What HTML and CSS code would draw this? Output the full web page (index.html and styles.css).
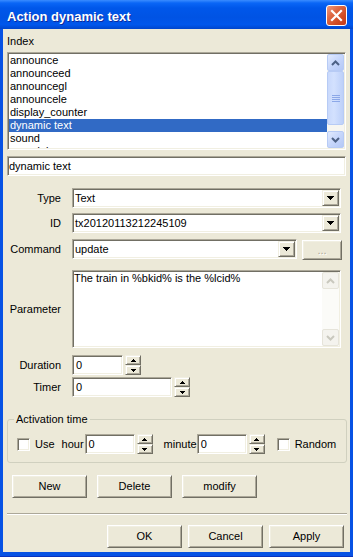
FILE: index.html
```html
<!DOCTYPE html>
<html>
<head>
<meta charset="utf-8">
<link rel="stylesheet" href="styles.css">
</head>
<body>
<div class="window">
  <div class="titlebar">
    <span class="title">Action dynamic text</span>
    <div class="close">
      <svg width="19" height="19" viewBox="0 0 19 19"><path d="M5 5L14 14M14 5L5 14" stroke="#fff" stroke-width="2.2" stroke-linecap="square"/></svg>
    </div>
  </div>
  <div class="client">
    <div class="lbl-index">Index</div>
    <div class="listbox sunken">
      <ul class="items">
        <li>announce</li>
        <li>announceed</li>
        <li>announcegl</li>
        <li>announcele</li>
        <li>display_counter</li>
        <li class="sel">dynamic text</li>
        <li>sound</li>
        <li class="partial">soundplay</li>
      </ul>
      <div class="xscroll">
        <div class="xbtn"><svg width="9" height="6" viewBox="0 0 9 6"><path d="M1 5L4.5 1.5L8 5" fill="none" stroke="#4D6185" stroke-width="2"/></svg></div>
        <div class="xtrack">
          <div class="xthumb"><svg width="8" height="7" viewBox="0 0 8 7"><path d="M0 0.5H8M0 2.5H8M0 4.5H8M0 6.5H8" stroke="#8CA8E8" stroke-width="1"/></svg></div>
        </div>
        <div class="xbtn"><svg width="9" height="6" viewBox="0 0 9 6"><path d="M1 1L4.5 4.5L8 1" fill="none" stroke="#4D6185" stroke-width="2"/></svg></div>
      </div>
    </div>
    <div class="field sunken">dynamic text</div>

    <div class="row r-type">
      <span class="lbl">Type</span>
      <div class="combo sunken w-full"><span class="ctext">Text</span><span class="ddbtn raised"><svg width="7" height="4" viewBox="0 0 7 4"><path d="M0 0h7v1h-1v1h-1v1h-1v1h-1v-1h-1v-1h-1v-1h-1z" fill="#000"/></svg></span></div>
    </div>
    <div class="row r-id">
      <span class="lbl">ID</span>
      <div class="combo sunken w-full"><span class="ctext">tx20120113212245109</span><span class="ddbtn raised"><svg width="7" height="4" viewBox="0 0 7 4"><path d="M0 0h7v1h-1v1h-1v1h-1v1h-1v-1h-1v-1h-1v-1h-1z" fill="#000"/></svg></span></div>
    </div>
    <div class="row r-cmd">
      <span class="lbl">Command</span>
      <div class="combo sunken w-cmd"><span class="ctext">update</span><span class="ddbtn raised"><svg width="7" height="4" viewBox="0 0 7 4"><path d="M0 0h7v1h-1v1h-1v1h-1v1h-1v-1h-1v-1h-1v-1h-1z" fill="#000"/></svg></span></div>
      <div class="pbtn dots">...</div>
    </div>
    <div class="row r-param">
      <span class="lbl">Parameter</span>
      <div class="memo sunken">
        <div class="mtext">The train in %bkid% is the %lcid%</div>
        <div class="dscroll">
          <div class="dbtn"><svg width="9" height="6" viewBox="0 0 9 6"><path d="M1 5L4.5 1.5L8 5" fill="none" stroke="#C9C8BE" stroke-width="2"/></svg></div>
          <div class="dtrack"></div>
          <div class="dbtn"><svg width="9" height="6" viewBox="0 0 9 6"><path d="M1 1L4.5 4.5L8 1" fill="none" stroke="#C9C8BE" stroke-width="2"/></svg></div>
        </div>
      </div>
    </div>
    <div class="row r-dur">
      <span class="lbl">Duration</span>
      <div class="num sunken w-dur">0</div>
      <div class="spin">
        <span class="sbtn raised"><svg width="5" height="3" viewBox="0 0 5 3"><path d="M2 0h1v1h1v1h1v1h-5v-1h1v-1h1z" fill="#000"/></svg></span>
        <span class="sbtn raised"><svg width="5" height="3" viewBox="0 0 5 3"><path d="M0 0h5v1h-1v1h-1v1h-1v-1h-1v-1h-1z" fill="#000"/></svg></span>
      </div>
    </div>
    <div class="row r-timer">
      <span class="lbl">Timer</span>
      <div class="num sunken w-timer">0</div>
      <div class="spin">
        <span class="sbtn raised"><svg width="5" height="3" viewBox="0 0 5 3"><path d="M2 0h1v1h1v1h1v1h-5v-1h1v-1h1z" fill="#000"/></svg></span>
        <span class="sbtn raised"><svg width="5" height="3" viewBox="0 0 5 3"><path d="M0 0h5v1h-1v1h-1v1h-1v-1h-1v-1h-1z" fill="#000"/></svg></span>
      </div>
    </div>

    <fieldset class="group">
      <legend>Activation time</legend>
      <div class="grow">
        <span class="cb sunken"></span>
        <span class="g-use">Use</span>
        <span class="g-hour">hour</span>
        <div class="num sunken w-g">0</div>
        <div class="spin">
          <span class="sbtn raised"><svg width="5" height="3" viewBox="0 0 5 3"><path d="M2 0h1v1h1v1h1v1h-5v-1h1v-1h1z" fill="#000"/></svg></span>
          <span class="sbtn raised"><svg width="5" height="3" viewBox="0 0 5 3"><path d="M0 0h5v1h-1v1h-1v1h-1v-1h-1v-1h-1z" fill="#000"/></svg></span>
        </div>
        <span class="g-min">minute</span>
        <div class="num sunken w-g">0</div>
        <div class="spin">
          <span class="sbtn raised"><svg width="5" height="3" viewBox="0 0 5 3"><path d="M2 0h1v1h1v1h1v1h-5v-1h1v-1h1z" fill="#000"/></svg></span>
          <span class="sbtn raised"><svg width="5" height="3" viewBox="0 0 5 3"><path d="M0 0h5v1h-1v1h-1v1h-1v-1h-1v-1h-1z" fill="#000"/></svg></span>
        </div>
        <span class="cb sunken cb-rand"></span>
        <span class="g-rand">Random</span>
      </div>
    </fieldset>

    <div class="btnrow">
      <div class="pbtn">New</div>
      <div class="pbtn">Delete</div>
      <div class="pbtn">modify</div>
    </div>
    <div class="sep"></div>
    <div class="btnrow okrow">
      <div class="pbtn">OK</div>
      <div class="pbtn">Cancel</div>
      <div class="pbtn">Apply</div>
    </div>
  </div>
</div>
</body>
</html>
```
FILE: styles.css
```css
* { box-sizing: border-box; margin: 0; padding: 0; }
body {
  margin: 0;
  font-family: "Liberation Sans", Arial, sans-serif;
  font-size: 11px;
  color: #000;
  background: #fff;
}
.window {
  width: 353px;
  height: 557px;
  background: #0752E4;
  display: flex;
  flex-direction: column;
  border-bottom: 1px solid #0A33BE;
}
.titlebar {
  height: 29px;
  flex: none;
  display: flex;
  align-items: flex-start;
  padding: 0 6px 0 7px;
  background: linear-gradient(to bottom, #3A8CFF 0, #0A66F6 3px, #0057EA 8px, #0053E4 60%, #0057EC 85%, #0045CC 100%);
}
.title {
  font-weight: bold;
  font-size: 13px;
  line-height: 15px;
  margin-top: 9px;
  color: #fff;
  text-shadow: 1px 1px 0 #0C2B9E;
}
.close {
  margin-left: auto;
  margin-top: 5px;
  width: 21px;
  height: 21px;
  border: 1px solid #fff;
  border-radius: 3px;
  background: linear-gradient(135deg, #EE9A7E 0, #DF6A45 35%, #D04A22 70%, #C2391A 100%);
  display: flex;
  align-items: center;
  justify-content: center;
}
.client {
  flex: 1;
  margin: 0 3px 4px 3px;
  background: #ECE9D8;
  padding: 0 3px 0 4px;
  display: flex;
  flex-direction: column;
}
.lbl-index { margin-top: 6px; line-height: 13px; }

.sunken {
  background: #fff;
  border: 1px solid;
  border-color: #ACA899 #fff #fff #ACA899;
  box-shadow: inset 1px 1px 0 #716F64, inset -1px -1px 0 #F1EFE2;
  padding: 1px;
}
.raised {
  background: #ECE9D8;
  border: 1px solid;
  border-color: #F1EFE2 #716F64 #716F64 #F1EFE2;
  box-shadow: inset 1px 1px 0 #fff, inset -1px -1px 0 #ACA899;
}

.listbox {
  margin-top: 4px;
  height: 98px;
  width: 339px;
  display: flex;
  overflow: hidden;
}
.items { flex: 1; list-style: none; overflow: hidden; }
.items li { height: 13px; line-height: 13px; padding-left: 1px; white-space: nowrap; }
.items li.sel { background: #316AC5; color: #fff; }
.items li.partial { height: 3px; overflow: hidden; }

.xscroll { width: 17px; flex: none; display: flex; flex-direction: column; background: #F7F6F1; }
.xbtn {
  height: 17px; flex: none;
  border: 1px solid #B7CBF5;
  border-radius: 2px;
  background: linear-gradient(135deg, #E1EAFE 0, #C6D6FB 50%, #B4C8F6 100%);
  display: flex; align-items: center; justify-content: center;
}
.xtrack { flex: 1; display: flex; flex-direction: column; }
.xthumb {
  height: 54px;
  border: 1px solid #B7CBF5;
  border-radius: 2px;
  background: linear-gradient(to right, #C9D9FC 0, #D3E1FE 40%, #BDD0F9 100%);
  display: flex; align-items: center; justify-content: center;
}

.field {
  margin-top: 6px;
  height: 20px;
  width: 339px;
  padding: 2px 1px 0 1px;
  line-height: 15px;
}

.row { display: flex; align-items: center; }
.lbl { width: 54px; flex: none; text-align: right; margin-right: 11px; line-height: 13px; }
.r-type { margin-top: 12px; }
.r-id { margin-top: 5px; }
.r-cmd { margin-top: 6px; align-items: flex-start; }
.r-cmd .lbl { margin-top: 4px; }
.r-param { margin-top: 10px; }
.r-dur { margin-top: 7px; }
.r-timer { margin-top: 2px; }

.combo { height: 20px; display: flex; }
.w-full { width: 269px; }
.w-cmd { width: 225px; }
.ctext { flex: 1; padding-left: 1px; line-height: 16px; white-space: nowrap; overflow: hidden; }
.ddbtn { width: 17px; height: 16px; flex: none; display: flex; align-items: center; justify-content: center; }

.pbtn {
  width: 75px;
  height: 23px;
  background: #ECE9D8;
  border: 1px solid;
  border-color: #fff #716F64 #716F64 #fff;
  box-shadow: inset 1px 1px 0 #F1EFE2, inset -1px -1px 0 #ACA899;
  display: flex; align-items: center; justify-content: center;
  line-height: 13px;
}
.dots {
  width: 40px;
  height: 20px;
  margin-left: 5px;
  margin-top: 1px;
  color: #ACA899;
  text-shadow: 1px 1px 0 #fff;
}

.memo { width: 269px; height: 78px; display: flex; }
.mtext { flex: 1; line-height: 11px; padding-top: 1px; white-space: nowrap; }
.dscroll { width: 17px; flex: none; display: flex; flex-direction: column; background: #FBFBF8; }
.dbtn {
  height: 17px; flex: none;
  border: 1px solid #E6E4DA;
  border-radius: 2px;
  background: #F4F3EE;
  display: flex; align-items: center; justify-content: center;
}
.dtrack { flex: 1; }

.num { height: 20px; padding-left: 3px; line-height: 16px; }
.w-dur { width: 51px; }
.w-timer { width: 100px; }
.w-g { width: 50px; }
.spin { width: 16px; height: 20px; margin-left: 2px; display: flex; flex-direction: column; flex: none; }
.sbtn { height: 10px; display: flex; align-items: center; justify-content: center; }

.group {
  margin-top: 16px;
  width: 340px;
  border: 1px solid #D0D0BF;
  border-radius: 3px;
  padding: 8px 0 8px 0;
}
.group legend {
  margin-left: 6px;
  padding: 0 2px;
  line-height: 13px;
}
.grow { display: flex; align-items: center; height: 20px; padding-left: 9px; }
.cb { width: 13px; height: 13px; flex: none; }
.g-use { margin-left: 5px; }
.g-hour { margin-left: 7px; margin-right: 1px; }
.g-min { margin-left: 11px; }
.cb-rand { margin-left: 12px; }
.g-rand { margin-left: 5px; }

.btnrow { display: flex; gap: 10px; margin-top: 12px; padding-left: 5px; }
.sep {
  margin-top: 15px;
  width: 340px;
  height: 2px;
  border-top: 1px solid #ACA899;
  border-bottom: 1px solid #fff;
}
.okrow { margin-top: 10px; gap: 6px; justify-content: flex-end; padding-left: 0; padding-right: 3px; }
```
